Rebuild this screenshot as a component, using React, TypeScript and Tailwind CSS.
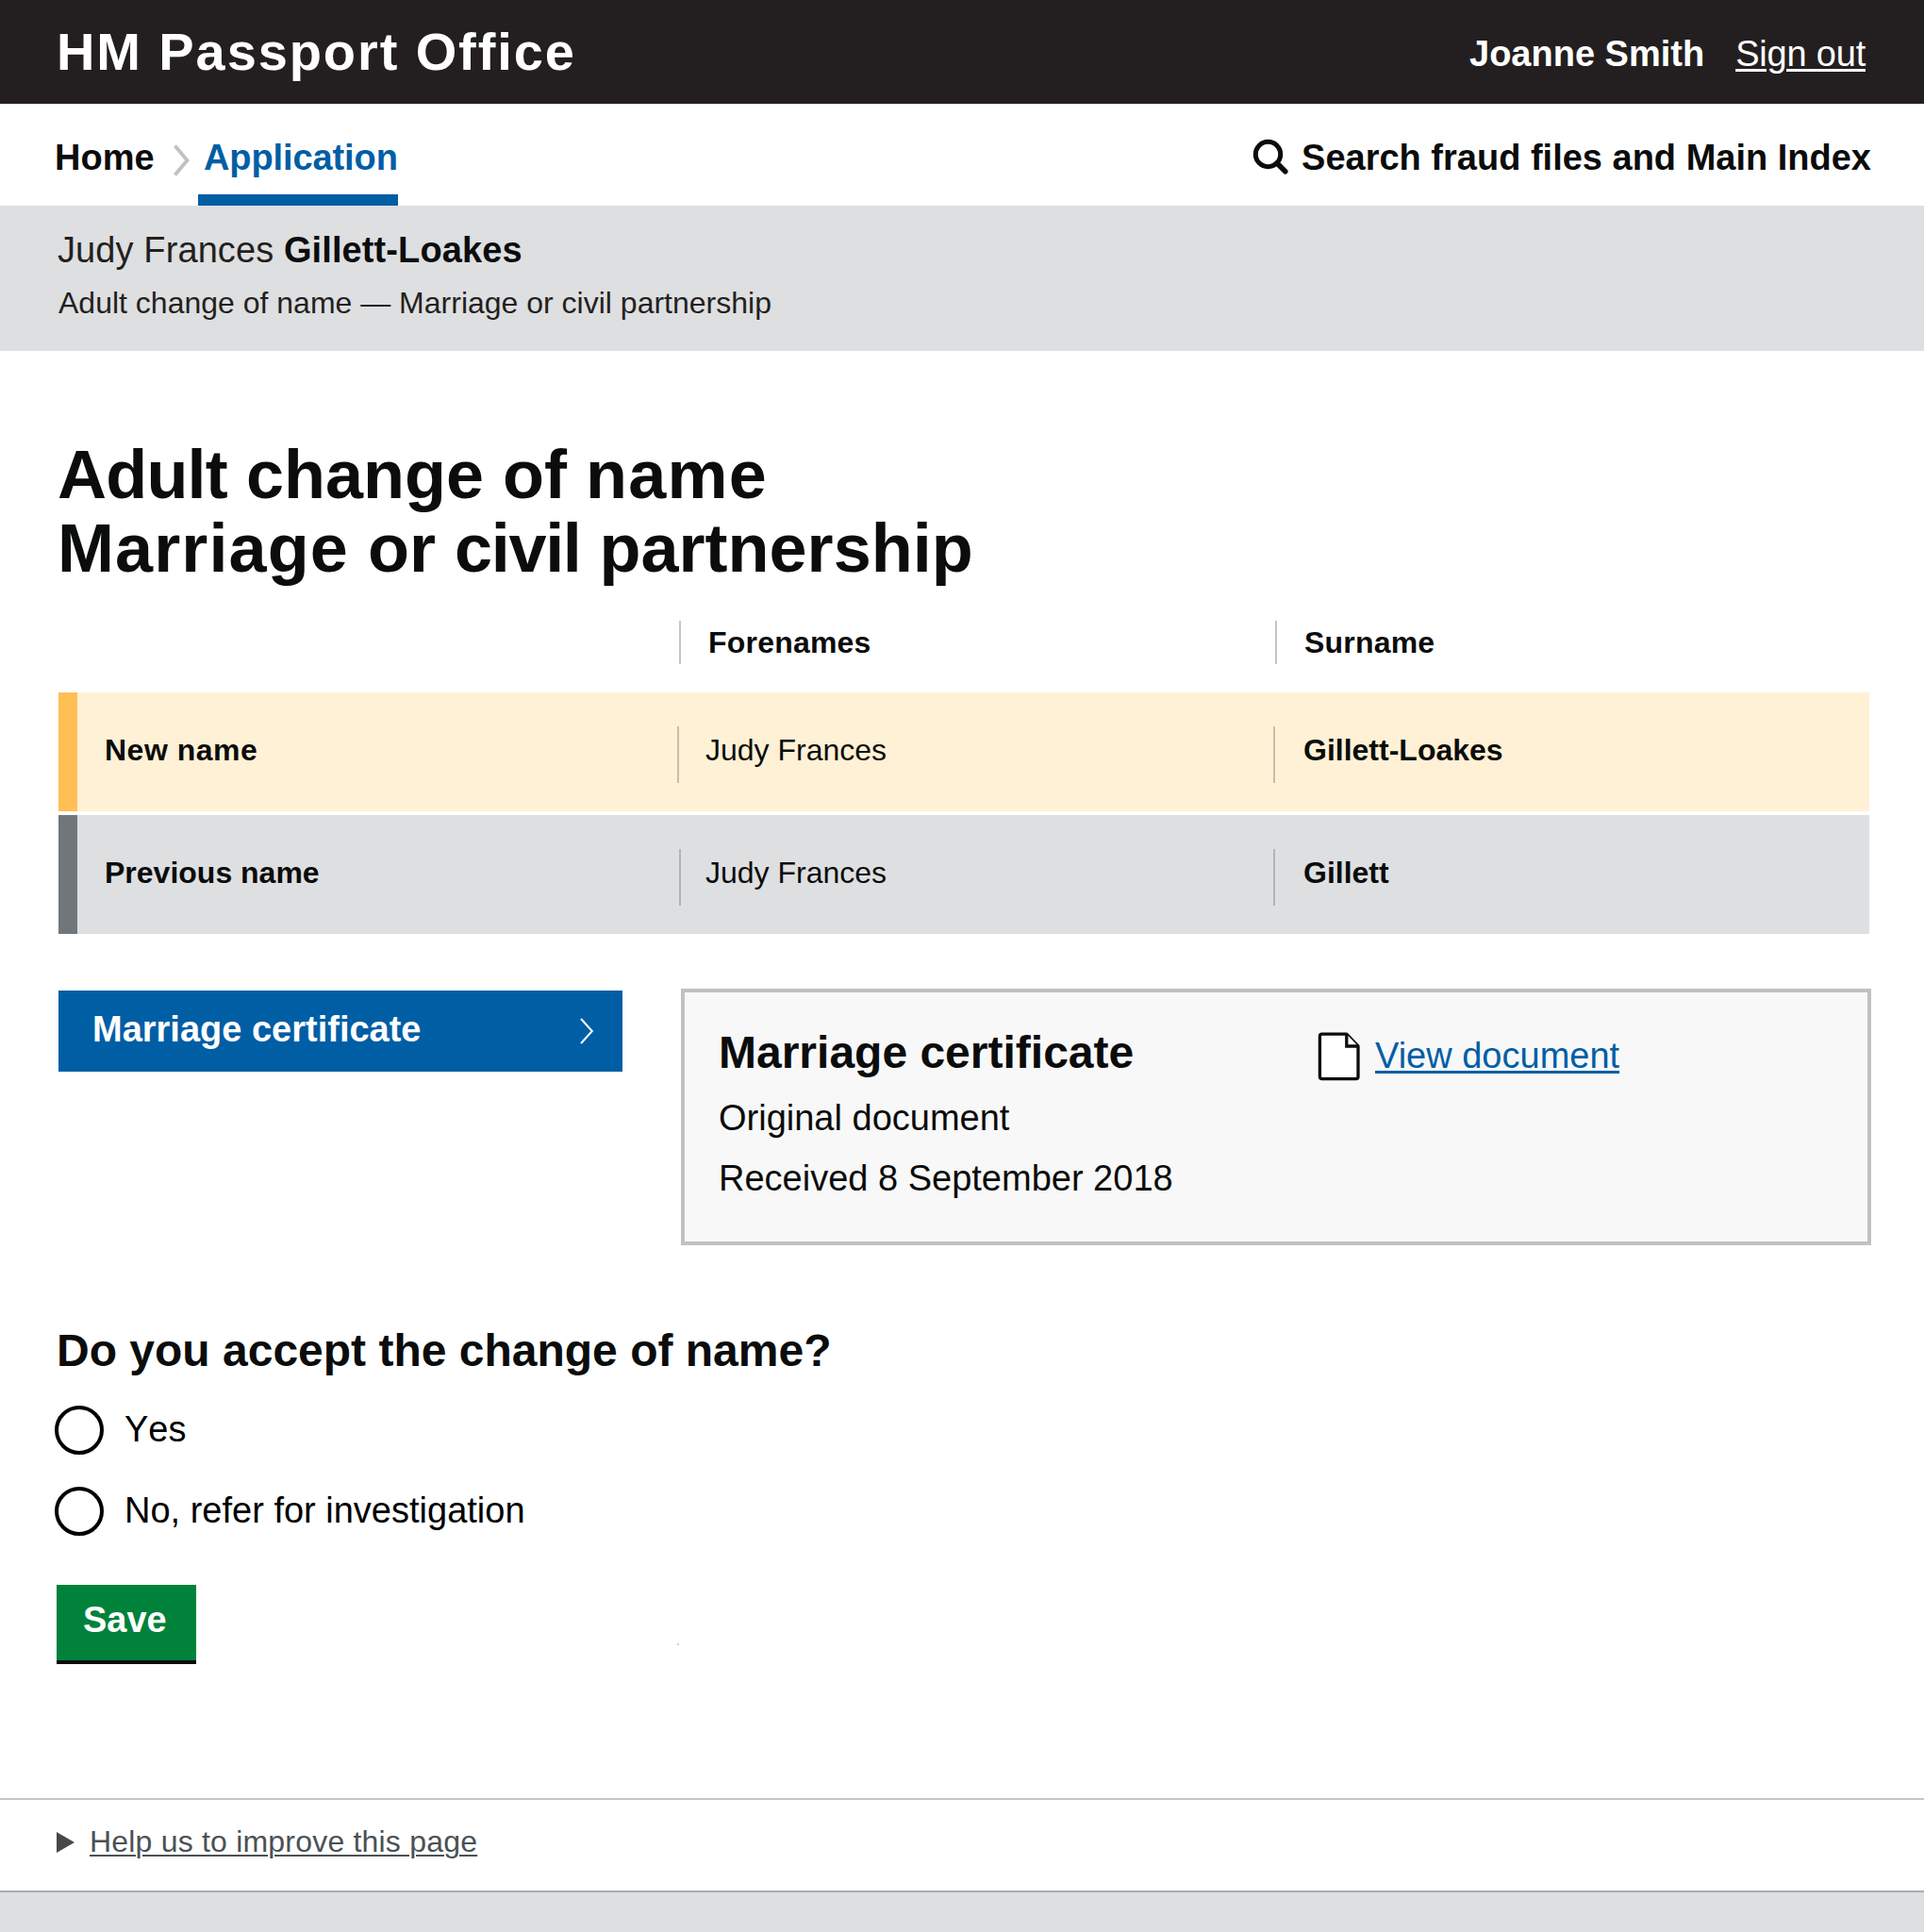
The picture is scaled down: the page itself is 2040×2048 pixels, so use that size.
import React from "react";

type Row = {
  label: string;
  forenames: string;
  surname: string;
  rowClass: string;
  ruleClass: string;
  labelClass: string;
};

const rows: Row[] = [
  {
    label: "New name",
    forenames: "Judy Frances",
    surname: "Gillett-Loakes",
    rowClass: "border-[#ffbf55] bg-[#fff1d5]",
    ruleClass: "bg-[#c8bda8]",
    labelClass: "tracking-[0.5px]",
  },
  {
    label: "Previous name",
    forenames: "Judy Frances",
    surname: "Gillett",
    rowClass: "border-[#6f777b] bg-[#dedfe1]",
    ruleClass: "bg-[#b1b3b5]",
    labelClass: "",
  },
];

function Header() {
  return (
    <header className="flex h-[110px] justify-between bg-[#231f20] pr-[62px] pl-[60px] text-white">
      <div className="pt-[23px] text-[56px] leading-[64px] font-bold tracking-[1.9px]">HM Passport Office</div>
      <div className="flex pt-[35px] text-[38px] leading-[44px]">
        <span className="mr-[33px] font-bold">Joanne Smith</span>
        <a className="tracking-[-0.2px] underline decoration-[3px] underline-offset-[3px]">Sign out</a>
      </div>
    </header>
  );
}

function Nav() {
  return (
    <nav className="flex h-[108px] justify-between pr-[56px] pl-[57px] text-[38px] leading-[44px] font-bold">
      <div className="flex">
        <a className="mr-[20px] w-[106px] pt-[35px] pl-px">Home</a>
        <svg className="mt-[42px] mr-[8px] h-[36px] w-[19px]" viewBox="0 0 19 36" fill="none">
          <path d="M2.5 2.5 L15.5 18 L2.5 33.5" stroke="#bfc1c3" strokeWidth="3.8" />
        </svg>
        <a className="h-[108px] w-[212px] border-b-[12px] border-[#005ea5] pt-[35px] pl-[6px] tracking-[-0.1px] text-[#005ea5]">Application</a>
      </div>
      <div className="flex">
        <svg className="mt-[37px] mr-[13px] h-[39px] w-[39px]" viewBox="0 0 39 39" fill="none" stroke="#0b0c0c">
          <circle cx="16.5" cy="16.5" r="13.2" strokeWidth="5" />
          <path d="M26 26 L34.8 34.8" strokeWidth="5.6" strokeLinecap="round" />
        </svg>
        <a className="pt-[35px]">Search fraud files and Main Index</a>
      </div>
    </nav>
  );
}

function NameTable() {
  return (
    <section className="pl-[62px]">
      <div className="flex h-[76px] text-[32px] leading-[36px] font-bold">
        <div className="ml-[658px] h-[46px] w-[632px] border-l-2 border-[#c4c5c7] pt-[5px] pl-[29px] tracking-[0.2px]">Forenames</div>
        <div className="h-[46px] border-l-2 border-[#c4c5c7] pt-[5px] pl-[29px] tracking-[0.2px]">Surname</div>
      </div>
      <div className="flex flex-col gap-[4px]">
        {rows.map((r, i) => (
          <div key={r.label} className={"flex h-[126px] w-[1920px] border-l-[20px] text-[32px] leading-[36px] " + r.rowClass}>
            <div className={"pt-[43px] pl-[29px] font-bold " + (i === 0 ? "w-[636px] " : "w-[638px] ") + r.labelClass}>{r.label}</div>
            <div className={"mt-[36px] h-[60px] w-[2px] " + r.ruleClass} />
            <div className={"pt-[43px] " + (i === 0 ? "w-[630px] pl-[28px]" : "w-[628px] pl-[26px]")}>{r.forenames}</div>
            <div className={"mt-[36px] h-[60px] w-[2px] " + r.ruleClass} />
            <div className="pt-[43px] pl-[30px] font-bold">{r.surname}</div>
          </div>
        ))}
      </div>
    </section>
  );
}

function Documents() {
  return (
    <section className="mt-[58px] flex items-start pl-[62px]">
      <button className="mt-[2px] mr-[62px] flex h-[86px] w-[598px] justify-between bg-[#005ea5] pr-[29px] pl-[36px] text-[38px] leading-[44px] font-bold text-white">
        <span className="pt-[19px]">Marriage certificate</span>
        <svg className="mt-[28px] h-[30px] w-[17px]" viewBox="0 0 17 30" fill="none">
          <path d="M2 2 L13.8 15 L2 28" stroke="#fff" strokeWidth="2" />
        </svg>
      </button>
      <div className="flex h-[272px] w-[1262px] border-4 border-[#bfc1c3] bg-[#f8f8f8] pl-[36px]">
        <div className="w-[634px] text-[38px] leading-[64px]">
          <h2 className="pt-[36px] text-[48px] leading-[56px] font-bold">Marriage certificate</h2>
          <p className="pt-[9px]">Original document</p>
          <p>Received 8 September 2018</p>
        </div>
        <svg className="mt-[41px] mr-[14px] h-[54px] w-[48px]" viewBox="0 0 48 54" fill="#fff" stroke="#0b0c0c" strokeWidth="3.3" strokeLinejoin="round">
          <path d="M5.8 3.2 H31.8 L44 16 V48.2 Q44 50.6 41.6 50.6 H5.8 Q3.4 50.6 3.4 48.2 V5.6 Q3.4 3.2 5.8 3.2 Z" />
          <path d="M31.8 3.2 V16 H44" strokeLinejoin="miter" />
        </svg>
        <a className="h-[44px] pt-[45px] text-[38px] leading-[44px] text-[#005ea5] underline decoration-[3px] underline-offset-[3px]">View document</a>
      </div>
    </section>
  );
}

function Question() {
  return (
    <section className="mt-[84px] pl-[58px]">
      <h2 className="pl-[2px] text-[48px] leading-[56px] font-bold">Do you accept the change of name?</h2>
      <div className="mt-[30px] flex flex-col gap-[34px] text-[38px] leading-[44px] text-black [font-kerning:none]">
        {["Yes", "No, refer for investigation"].map((t) => (
          <label key={t} className="flex h-[52px]">
            <span className="mr-[22px] h-[52px] w-[52px] rounded-full border-4 border-black bg-white" />
            <span className="pt-[3px]">{t}</span>
          </label>
        ))}
      </div>
      <div className="mt-[52px] flex">
        <button className="ml-[2px] h-[84px] w-[148px] border-b-4 border-[#0b0c0c] bg-[#00823b] pt-[15px] pl-[28px] text-left text-[38px] leading-[44px] font-bold text-white">
          <span className="block h-[65px]">Save</span>
        </button>
        <div className="mt-[62px] ml-[510px] h-[2px] w-[2px] bg-[#cccccc]" />
      </div>
    </section>
  );
}

export default function App() {
  return (
    <div className="flex h-[2048px] w-[2040px] flex-col overflow-hidden bg-white font-['Liberation_Sans',Arial,sans-serif] whitespace-nowrap text-[#0b0c0c]">
      <Header />
      <Nav />
      <div className="h-[154px] bg-[#dedfe1] pl-[61px] text-[#231f20]">
        <div className="pt-[25px] text-[38px] leading-[44px]">
          <span className="tracking-[0.1px]">Judy Frances </span>
          <b className="tracking-[0.1px] text-[#0b0c0c]">Gillett-Loakes</b>
        </div>
        <div className="mt-[16px] pl-px text-[32px] leading-[36px]">Adult change of name — Marriage or civil partnership</div>
      </div>
      <h1 className="h-[286px] pt-[92px] pl-[61px] text-[72px] leading-[78px] font-bold">
        <span className="tracking-[-0.8px]">Adult</span> change of <span className="tracking-[1.2px]">name</span>
        <br />
        <span className="tracking-[1.1px]">Marriage</span> or <span className="tracking-[-1.3px]">civil</span> partnership
      </h1>
      <NameTable />
      <Documents />
      <Question />
      <footer className="mt-[142px] flex grow flex-col border-t-2 border-[#c4c5c7]">
        <div className="flex h-[96px] pl-[60px] text-[32px] leading-[36px] text-[#4b5155]">
          <svg className="mt-[34px] mr-[16px] h-[22px] w-[19px]" viewBox="0 0 19 22">
            <path d="M0 0 L19 11 L0 22 Z" fill="#45494c" />
          </svg>
          <a className="pt-[26px] tracking-[0.2px] underline decoration-2 underline-offset-[3px]">Help us to improve this page</a>
        </div>
        <div className="grow border-t-2 border-[#a7adb3] bg-[#dedfe1]" />
      </footer>
    </div>
  );
}
